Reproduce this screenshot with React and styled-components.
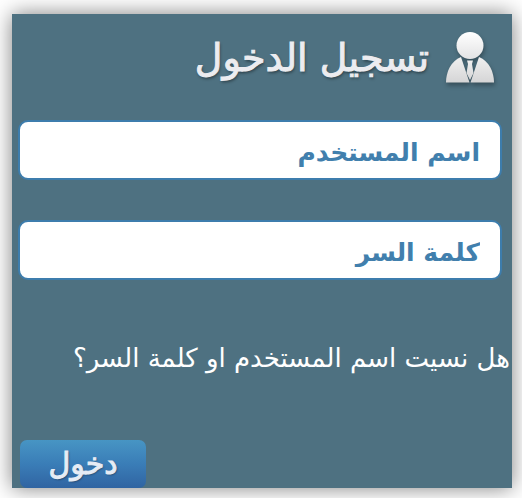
import React from 'react';
import styled, { createGlobalStyle } from 'styled-components';

const GlobalStyle = createGlobalStyle`
  *,
  *::before,
  *::after {
    box-sizing: border-box;
  }

  body {
    margin: 0;
    background-color: #fff;
    font-family: 'DejaVu Sans', sans-serif;
  }
`;

const Page = styled.main`
  padding: 14px 10px 10px 12px;
`;

const LoginCard = styled.form`
  display: flex;
  flex-direction: column;
  background-color: #4e7181;
  box-shadow: 0 0 20px rgba(0, 0, 0, 0.5);
`;

const Header = styled.header`
  display: flex;
  align-items: center;
  gap: 16px;
  height: 106px;
  padding: 0 17px 18px;
`;

const Title = styled.h1`
  margin: 0;
  color: #ececf0;
  font-size: 38px;
  font-weight: 400;
  line-height: 48px;
  text-shadow: 1px 2px 3px rgba(0, 0, 0, 0.4);
  -webkit-text-stroke: 1px #ececf0;
`;

const StyledIcon = styled.svg`
  flex: none;
  width: 50px;
  height: 54px;
  filter: drop-shadow(1px 3px 2px rgba(0, 0, 0, 0.3));
`;

const Fields = styled.div`
  display: flex;
  flex-direction: column;
  gap: 40px;
  padding: 0 10px 0 6px;
`;

const TextField = styled.input`
  width: 100%;
  height: 60px;
  padding: 4px 20px 0;
  border: 2px solid #3d7dad;
  border-radius: 10px;
  outline: none;
  background-color: #fff;
  color: #417fad;
  font-family: inherit;
  font-size: 25px;
  font-weight: 700;

  &::placeholder {
    color: #417fad;
    opacity: 1;
  }
`;

const ForgotLink = styled.a`
  margin-top: 60px;
  padding: 0 2px;
  color: #fff;
  font-size: 26px;
  line-height: 36px;
  text-decoration: none;
  white-space: nowrap;
`;

const SubmitButton = styled.button`
  align-self: flex-end;
  width: 126px;
  height: 48px;
  margin: 64px 0 0 8px;
  padding: 0;
  border: 0;
  border-radius: 7px;
  background: linear-gradient(#4795c4, #3a7db7 50%, #3064a2);
  color: #e6ecf5;
  font-family: inherit;
  font-size: 30px;
  line-height: 40px;
  text-shadow: 1px 1px 2px rgba(0, 0, 0, 0.4);
  -webkit-text-stroke: 1px #e6ecf5;
  cursor: pointer;
`;

const UserIcon = () => (
  <StyledIcon viewBox="0 0 50 54" aria-hidden="true">
    <defs>
      <linearGradient id="head" x1="0" y1="0" x2="0" y2="1">
        <stop offset="0" stopColor="#fff" />
        <stop offset="1" stopColor="#e3e3e4" />
      </linearGradient>
      <linearGradient id="suit" x1="0" y1="0" x2="0" y2="1">
        <stop offset="0" stopColor="#f0f0f0" />
        <stop offset="1" stopColor="#d5d5d6" />
      </linearGradient>
    </defs>
    <circle cx="25" cy="14.5" r="13.5" fill="url(#head)" />
    <path d="M16 26 L24.5 51.5 H1 C1 41 6 30 16 26 Z" fill="url(#suit)" />
    <path d="M34 26 L25.5 51.5 H49 C49 41 44 30 34 26 Z" fill="url(#suit)" />
    <path d="M22 29.5 H28 L27 33 L28.5 42 L25 49 L21.5 42 L23 33 Z" fill="url(#suit)" />
  </StyledIcon>
);

const App = () => (
  <>
    <GlobalStyle />
    <Page dir="rtl" lang="ar">
      <LoginCard onSubmit={e => e.preventDefault()}>
        <Header>
          <UserIcon />
          <Title>تسجيل الدخول</Title>
        </Header>
        <Fields>
          <TextField
            type="text"
            name="username"
            placeholder="اسم المستخدم"
            aria-label="اسم المستخدم"
            autoComplete="username"
          />
          <TextField
            type="password"
            name="password"
            placeholder="كلمة السر"
            aria-label="كلمة السر"
            autoComplete="current-password"
          />
        </Fields>
        <ForgotLink href="#forgot">هل نسيت اسم المستخدم او كلمة السر؟</ForgotLink>
        <SubmitButton type="submit">دخول</SubmitButton>
      </LoginCard>
    </Page>
  </>
);

export default App;
